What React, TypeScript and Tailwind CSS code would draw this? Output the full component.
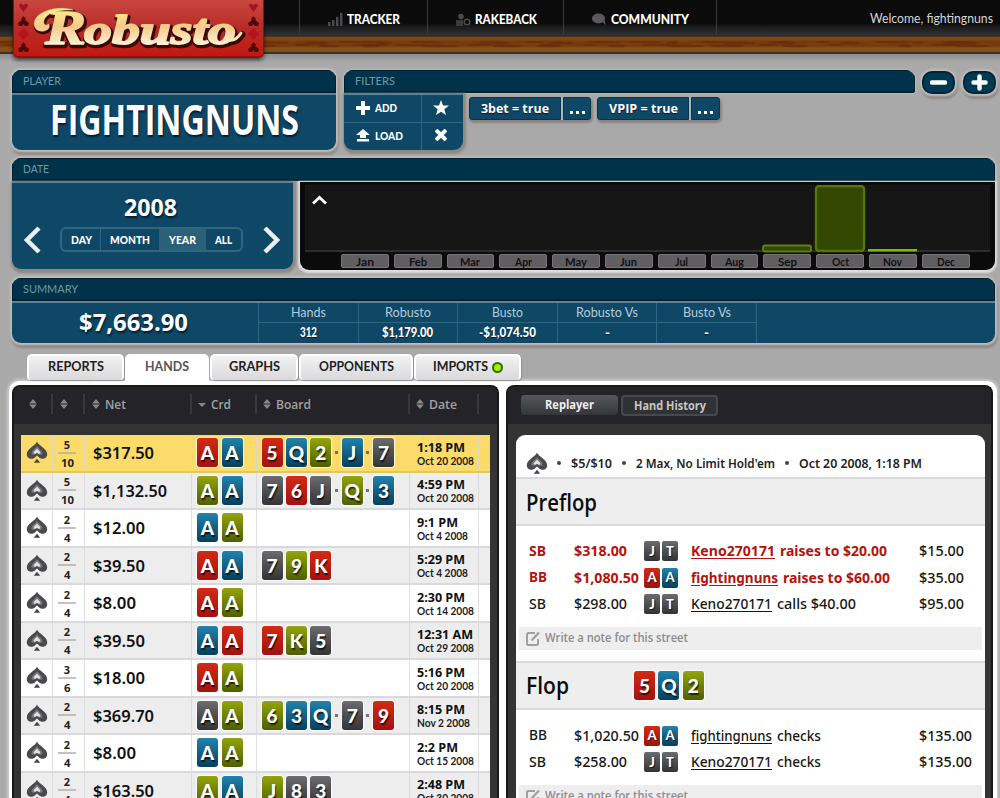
import { useLayoutEffect, useRef, useState, type ReactNode } from 'react';

/** Text condensed or stretched horizontally so that it fills a set width. */
function Fit({ w, className = '', inner = '', children }: { w: number; className?: string; inner?: string; children: ReactNode }) {
  const ref = useRef<HTMLSpanElement>(null);
  const [scale, setScale] = useState(1);
  useLayoutEffect(() => {
    const el = ref.current;
    if (!el) return;
    el.style.transform = 'none';
    const natural = el.getBoundingClientRect().width;
    const next = natural ? w / natural : 1;
    el.style.transform = `scaleX(${next})`;
    setScale(next);
  }, [w, children]);
  return (
    <span className={`inline-block shrink-0 text-left leading-none ${className}`} style={{ width: w }}>
      <span ref={ref} className={`inline-block origin-left whitespace-nowrap ${inner}`} style={{ transform: `scaleX(${scale})` }}>
        {children}
      </span>
    </span>
  );
}

type Suit = 'r' | 'b' | 'g' | 'k';
const suitFill: Record<Suit, string> = {
  r: 'bg-linear-to-b from-[#d42a14] to-[#a01210]',
  b: 'bg-linear-to-b from-[#2283ae] to-[#07405c]',
  g: 'bg-linear-to-b from-[#94a50c] to-[#4f5f00]',
  k: 'bg-linear-to-b from-[#6c6c6f] to-[#343436]',
};

function Card({ c }: { c: string }) {
  return (
    <span className={`flex h-[29px] w-[21px] shrink-0 items-center justify-center rounded-[3px] shadow-[0_0_1px_1px_rgba(255,255,255,0.7)] ${suitFill[c[1] as Suit]}`}>
      <span className="font-[Lato,sans-serif] text-[19px] leading-none font-black text-white [text-shadow:1px_2px_1px_rgba(0,0,0,0.65)]">{c[0]}</span>
    </span>
  );
}

function MiniCard({ c }: { c: string }) {
  return (
    <span className={`flex h-[20px] w-[16px] items-center justify-center rounded-[2px] ${suitFill[c[1] as Suit]}`}>
      <span className="font-[Lato,sans-serif] text-[13px] leading-none font-black text-white [text-shadow:1px_1px_1px_rgba(0,0,0,0.7)]">{c[0]}</span>
    </span>
  );
}

function Spade() {
  return (
    <svg width="22" height="24" viewBox="0 0 22 24">
      <path d="M11 .8C9 4.8.8 8 .8 13.2c0 4.8 5.8 5.8 8.3 3.1l1.9-1.7 1.9 1.7c2.5 2.7 8.3 1.7 8.3-3.1C21.200 8 13 4.800 11 .8Z" fill="#4a4a4c" />
      <path d="M11 5c-1.500 2.500-5.500 4.500-5.500 7.200 0 2.100 3 2.300 5.500-.2 2.500 2.500 5.500 2.300 5.500.2C16.500 9.500 12.500 7.500 11 5Z" fill="#77777a" />
      <path d="M11 7.500c-1.200 1.700-3.300 2.900-3.300 4.300 0 1.300 2 1.300 3.300 0 1.300 1.300 3.300 1.300 3.300 0 0-1.400-2.100-2.600-3.300-4.300Z" fill="#e2e2e2" />
      <path d="m11 17.800 3.200 4H7.800Z" fill="#444446" />
    </svg>
  );
}

function Sort({ desc = false }: { desc?: boolean }) {
  return (
    <svg width="8" height="10" viewBox="0 0 8 10" fill="#88888b">
      {desc ? <path d="M0 4h8L4 8Z" /> : <path d="M4 0l3.800 4.500H.2ZM4 10l3.800-4.500H.2Z" />}
    </svg>
  );
}

function LogoSuits() {
  return (
    <svg width="11" height="54" viewBox="0 0 11 54">
      <path d="M5.500 12 1 6c0-3 3-3 4.500-.5C7 3 10 3 10 6Z" fill="#a31420" />
      <path d="M5.500 16 3 19l1 1-4 3 1 3h3l1.500-2L7 26h3l1-3-4-3 1-1Z" fill="#4e0a0a" />
      <path d="M5.500 28 11 34l-5.500 6L0 34Z" fill="#b3131a" />
      <path d="M5.500 42 3 45l1 1-4 3 1 3h3l1.500-2L7 52h3l1-3-4-3 1-1Z" fill="#4e0a0a" />
    </svg>
  );
}

function Logo() {
  return (
    <div className="absolute top-0 left-[13px] flex h-[58px] w-[251px] justify-between rounded-b-[5px] border-x border-b-2 border-[#961008] bg-linear-to-b from-[#c9473f] via-[#b82a26] to-[#c2180e] px-1 shadow-[0_2px_4px_rgba(0,0,0,0.65)]">
      <LogoSuits />
      <svg width="218" height="56" viewBox="0 0 218 56">
        <defs>
          <linearGradient id="cream" gradientUnits="userSpaceOnUse" x1="0" y1="8" x2="0" y2="46">
            <stop offset="0" stopColor="#fbf08c" />
            <stop offset=".5" stopColor="#f5c98c" />
            <stop offset="1" stopColor="#fff6dc" />
          </linearGradient>
        </defs>
        <g fontFamily="'Liberation Serif', serif" fontStyle="italic" fontWeight="700" strokeLinejoin="round">
          <g stroke="#3a0b06" fill="#3a0b06" transform="translate(1 1.500)">
            <path d="M14 31C2 33 0 18 14 12c11-5 23-4 29-2-13.500-.5-24 2-28 8-3 5 0 9 4 6 1 4-1 6-5 7Z" strokeWidth="3" />
            <text x="15" y="44" fontSize="49" textLength="41" lengthAdjust="spacingAndGlyphs" strokeWidth="4.500">R</text>
            <text x="54" y="44" fontSize="43" textLength="152" lengthAdjust="spacingAndGlyphs" strokeWidth="4.500">obusto</text>
            <path d="M198 40c6 1 10-2 13-7" fill="none" strokeWidth="7" strokeLinecap="round" />
          </g>
          <g fill="url(#cream)" stroke="url(#cream)">
            <path d="M14 31C2 33 0 18 14 12c11-5 23-4 29-2-13.500-.5-24 2-28 8-3 5 0 9 4 6 1 4-1 6-5 7Z" strokeWidth=".5" />
            <path d="M198 40c6 1 10-2 13-7" fill="none" strokeWidth="3" strokeLinecap="round" />
            <text x="15" y="44" fontSize="49" textLength="41" lengthAdjust="spacingAndGlyphs" strokeWidth="1.500">R</text>
            <text x="54" y="44" fontSize="43" textLength="152" lengthAdjust="spacingAndGlyphs" strokeWidth="1.800">obusto</text>
          </g>
        </g>
      </svg>
      <LogoSuits />
    </div>
  );
}

function Wood() {
  const streaks = Array.from({ length: 90 }, (_, i) => ({
    x: (i * 137) % 1000,
    y: 5 + ((i * 7) % 6),
    rx: 6 + ((i * 11) % 14),
    ry: 0.6 + (i % 3) * 0.5,
    fill: i % 3 === 0 ? '#834613' : '#6a2b09',
  }));
  return (
    <svg width="1000" height="18" className="block">
      <rect width="1000" height="18" fill="#7c4817" />
      <rect y="4.500" width="1000" height="6" fill="#743a0d" />
      {streaks.map((s, i) => (
        <ellipse key={i} cx={s.x} cy={s.y} rx={s.rx} ry={s.ry} fill={s.fill} opacity=".7" />
      ))}
      <rect y="11.500" width="1000" height="4" fill="#87501a" />
      <rect y="0" width="1000" height="1" fill="#4c3018" />
      <rect y="16" width="1000" height="2" fill="#39342c" />
    </svg>
  );
}

function NavItem({ label, w, box, icon }: { label: string; w: number; box: string; icon: ReactNode }) {
  return (
    <div className={`flex h-[35px] items-center border-l border-[#3a3a3a] pt-[3px] ${box}`}>
      {icon}
      <Fit w={w} className="font-[Lato,sans-serif] text-[13px] font-black text-white">{label}</Fit>
    </div>
  );
}

function PanelHead({ label, w }: { label: string; w: number }) {
  return (
    <div className="flex h-[23px] items-center border border-b-2 border-[#00202f] bg-[#003349] pb-px pl-[10px]">
      <Fit w={w} className="font-[Lato,sans-serif] text-[11px] text-[#6d99ab]">{label}</Fit>
    </div>
  );
}

const panelBlue = 'bg-[#0f4767]';
const glow = 'shadow-[0_0_2px_2px_#c2bcba,1px_3px_2px_2px_#8d8987]';

function FilterTag({ label, w, boxes }: { label: string; w: number; boxes: [string, string] }) {
  return (
    <div className="flex h-[23px] gap-[2px] rounded-[4px] bg-[#aeb6ba] shadow-[1px_2px_2px_1px_#898583]">
      <div className={`flex items-center justify-center rounded-l-[3px] border border-[#00384f] ${panelBlue} ${boxes[0]}`}>
        <Fit w={w} className="text-[13px] font-bold text-white [text-shadow:0_1px_1px_#001c2c]">{label}</Fit>
      </div>
      <div className={`flex items-end justify-center gap-[3px] rounded-r-[3px] border border-[#00384f] pb-[5px] ${panelBlue} ${boxes[1]}`}>
        <i className="size-[3px] bg-white" /><i className="size-[3px] bg-white" /><i className="size-[3px] bg-white" />
      </div>
    </div>
  );
}

const months: [string, number][] = [['Jan', 18], ['Feb', 18], ['Mar', 20], ['Apr', 17], ['May', 22], ['Jun', 17], ['Jul', 13], ['Aug', 19], ['Sep', 19], ['Oct', 17], ['Nov', 19], ['Dec', 18]];

function Chart() {
  return (
    <div className="h-[88px] w-[695px] rounded-b-[9px] bg-[#0b0b0b] px-[5px] pt-[3px] shadow-[0_1px_2px_2px_#dedede]">
      <div className="relative h-[67px] border-b-2 border-[#2e2d2e] bg-[#181718] bg-[repeating-linear-gradient(90deg,transparent_0_1px,rgba(0,0,0,0.12)_1px_2px)]">
        <svg className="absolute top-[10px] left-[7px]" width="15" height="10" fill="none" stroke="#fff" strokeWidth="2.800"><path d="m1 8.500 6.500-6 6.500 6" /></svg>
        <svg className="absolute top-0 left-[457px]" width="158" height="68">
          <rect x="1" y="60.500" width="48" height="6" rx="2" fill="#344700" stroke="#5d8108" strokeWidth="2" />
          <rect x="54" y="1" width="48" height="65" rx="3" fill="#344700" stroke="#557802" strokeWidth="2.400" />
          <rect x="106" y="64" width="49" height="2.500" fill="#82b800" />
        </svg>
      </div>
      <div className="flex gap-[5px] pt-[2px] pl-[36px]">
        {months.map(([m, w]) => (
          <div key={m} className="flex h-[14px] w-[47.800px] items-center justify-center rounded-[2px] border border-[#77737a] bg-[#615e62]">
            <Fit w={w} className="font-[Lato,sans-serif] text-[11px] font-bold text-[#111]">{m}</Fit>
          </div>
        ))}
      </div>
    </div>
  );
}

const stats: [string, number, string, number][] = [
  ['Hands', 35, '312', 17], ['Robusto', 46, '$1,179.00', 51], ['Busto', 31, '-$1,074.50', 57], ['Robusto Vs', 62, '-', 5], ['Busto Vs', 48, '-', 5],
];

type Row = { lo: string; hi: string; net: string; nw: number; crd: string[]; board: string[]; t: string; tw: number; d: string; dw: number };
const rows: Row[] = [
  { lo: '5', hi: '10', net: '$317.50', nw: 61, crd: ['Ar', 'Ab'], board: ['5r', 'Qb', '2g', 'Jb', '7k'], t: '1:18 PM', tw: 48, d: 'Oct 20 2008', dw: 57 },
  { lo: '5', hi: '10', net: '$1,132.50', nw: 74, crd: ['Ag', 'Ab'], board: ['7k', '6r', 'Jk', 'Qg', '3b'], t: '4:59 PM', tw: 48, d: 'Oct 20 2008', dw: 57 },
  { lo: '2', hi: '4', net: '$12.00', nw: 52, crd: ['Ab', 'Ag'], board: [], t: '9:1 PM', tw: 41, d: 'Oct 4 2008', dw: 51 },
  { lo: '2', hi: '4', net: '$39.50', nw: 52, crd: ['Ar', 'Ab'], board: ['7k', '9g', 'Kr'], t: '5:29 PM', tw: 48, d: 'Oct 4 2008', dw: 51 },
  { lo: '2', hi: '4', net: '$8.00', nw: 43, crd: ['Ar', 'Ag'], board: [], t: '2:30 PM', tw: 48, d: 'Oct 14 2008', dw: 57 },
  { lo: '2', hi: '4', net: '$39.50', nw: 52, crd: ['Ab', 'Ar'], board: ['7r', 'Kg', '5k'], t: '12:31 AM', tw: 56, d: 'Oct 29 2008', dw: 57 },
  { lo: '3', hi: '6', net: '$18.00', nw: 52, crd: ['Ar', 'Ag'], board: [], t: '5:16 PM', tw: 48, d: 'Oct 20 2008', dw: 57 },
  { lo: '2', hi: '4', net: '$369.70', nw: 61, crd: ['Ak', 'Ag'], board: ['6g', '3b', 'Qb', '7k', '9r'], t: '8:15 PM', tw: 48, d: 'Nov 2 2008', dw: 53 },
  { lo: '2', hi: '4', net: '$8.00', nw: 43, crd: ['Ab', 'Ag'], board: [], t: '2:2 PM', tw: 41, d: 'Oct 15 2008', dw: 57 },
  { lo: '2', hi: '4', net: '$163.50', nw: 61, crd: ['Ag', 'Ab'], board: ['Jg', '8k', '3k'], t: '2:48 PM', tw: 48, d: 'Oct 30 2008', dw: 57 },
];

const cols = 'grid grid-cols-[32px_32px_107px_64.500px_153.500px_69px_11px]';
const cell = 'flex items-center border-r border-[#d6d6dc]/80';

function HandRow({ r, i }: { r: Row; i: number }) {
  const tone = i === 0 ? 'bg-[#fbdc6a] border-[#e5c75f]' : i % 2 ? 'bg-[#ededee] border-[#d9d9de]' : 'bg-white border-[#d9d9de]';
  return (
    <div className={`h-[37.500px] border-b-2 ${cols} ${tone}`}>
      <div className={`${cell} pt-px pl-[5px]`}><Spade /></div>
      <div className={`${cell} flex-col justify-center pt-[2px] pr-[3px] text-[11px] leading-none font-bold text-[#222]`}>
        <span className="h-[13px]">{r.lo}</span>
        <span className="h-[2px] w-[18px] bg-[#a9a9aa]/70" />
        <Fit w={r.hi === '10' ? 13 : 6.5} className="mt-[3px] h-[12px]">{r.hi}</Fit>
      </div>
      <div className={`${cell} pt-px pl-[8px]`}><Fit w={r.nw} className="font-['Noto_Sans',sans-serif] text-[16.500px] font-semibold text-[#111]">{r.net}</Fit></div>
      <div className={`${cell} gap-[3.500px] pl-[5px]`}>{r.crd.map((c, k) => <Card key={k} c={c} />)}</div>
      <div className={`${cell} pl-[5px]`}>
        {r.board.map((c, k) => (
          <div key={k} className="flex items-center">
            {k > 2 && <i className="mr-[4px] ml-[3.400px] size-[3px] bg-[#555]/80" />}
            {k > 0 && k < 3 && <i className="w-[3.400px]" />}
            <Card c={c} />
          </div>
        ))}
      </div>
      <div className={`${cell} flex-col items-start justify-center gap-[2px] pt-[3px] pl-[7px]`}>
        <Fit w={r.tw} className="h-[12px] text-[12px] font-bold text-[#111]">{r.t}</Fit>
        <Fit w={r.dw} className="h-[11px] font-[Lato,sans-serif] text-[10.500px] font-bold text-[#1c1c1c]">{r.d}</Fit>
      </div>
      <div />
    </div>
  );
}

function HeadCell({ label, w, pad, desc }: { label?: string; w?: number; pad: string; desc?: boolean }) {
  return (
    <div className={`flex h-[20px] items-center gap-[5px] border-r-2 border-[#38383c] ${pad}`}>
      <Sort desc={desc} />
      {label && <Fit w={w ?? 20} className="text-[13px] font-semibold text-[#a2a2a5]">{label}</Fit>}
    </div>
  );
}

type Action = { pos: string; stack: string; sw: number; cards: string[]; who: string; whoW: number; act: string; aw: number; pot: string; pw: number; red?: boolean };

function ActionRow({ a }: { a: Action }) {
  return (
    <div className={`grid h-[26.500px] grid-cols-[45px_70px_47px_228px_1fr] items-center pl-[13px] font-['Noto_Sans',sans-serif] text-[14px] ${a.red ? 'font-bold text-[#b3140c]' : 'font-medium text-[#161616]'}`}>
      <Fit w={a.pos === 'SB' ? 17 : 18} className="text-[13.500px]">{a.pos}</Fit>
      <Fit w={a.sw}>{a.stack}</Fit>
      <div className="flex gap-[2px]">{a.cards.map((c) => <MiniCard key={c} c={c} />)}</div>
      <div className="flex gap-[5px]">
        <Fit w={a.whoW} inner="underline underline-offset-2">{a.who}</Fit>
        <Fit w={a.aw}>{a.act}</Fit>
      </div>
      <Fit w={a.pw} className="font-medium text-[#161616]">{a.pot}</Fit>
    </div>
  );
}

const preflop: Action[] = [
  { pos: 'SB', stack: '$318.00', sw: 53, cards: ['Jk', 'Tk'], who: 'Keno270171', whoW: 84, act: 'raises to $20.00', aw: 107, pot: '$15.00', pw: 45, red: true },
  { pos: 'BB', stack: '$1,080.50', sw: 65, cards: ['Ar', 'Ab'], who: 'fightingnuns', whoW: 87, act: 'raises to $60.00', aw: 107, pot: '$35.00', pw: 45, red: true },
  { pos: 'SB', stack: '$298.00', sw: 53, cards: ['Jk', 'Tk'], who: 'Keno270171', whoW: 81, act: 'calls $40.00', aw: 79, pot: '$95.00', pw: 45 },
];
const flop: Action[] = [
  { pos: 'BB', stack: '$1,020.50', sw: 65, cards: ['Ar', 'Ab'], who: 'fightingnuns', whoW: 81, act: 'checks', aw: 44, pot: '$135.00', pw: 53 },
  { pos: 'SB', stack: '$258.00', sw: 53, cards: ['Jk', 'Tk'], who: 'Keno270171', whoW: 81, act: 'checks', aw: 44, pot: '$135.00', pw: 53 },
];

function NoteBar() {
  return (
    <div className="mx-[3px] flex h-[23px] items-center bg-[#eeeeee] pl-[7px]">
      <svg width="15" height="15" viewBox="0 0 15 15" fill="none" stroke="#a0a0a0" strokeWidth="2">
        <path d="M9 2H2.500Q1 2 1 3.500v9Q1 14 2.500 14h8q1.500 0 1.500-1.500V8" /><path d="m5.500 9.500L13 1.500" strokeWidth="2.200" />
      </svg>
      <Fit w={143} className="ml-[4px] text-[12px] font-semibold text-[#8c8c8c]">Write a note for this street</Fit>
    </div>
  );
}

function StreetHead({ label, w, cards = [] }: { label: string; w: number; cards?: string[] }) {
  return (
    <div className="flex h-[49px] items-center border-y-2 border-[#d9d9df] bg-[#eeeeee] pt-px pl-[10px]">
      <Fit w={w} className="text-[23px] font-semibold text-[#0c0c0c]">{label}</Fit>
      <div className="flex gap-[3.400px] pl-[65px]">{cards.map((c) => <Card key={c} c={c} />)}</div>
    </div>
  );
}

const tabs: { label: string; w: number; box: string; on?: boolean; dot?: boolean }[] = [
  { label: 'REPORTS', w: 56, box: 'w-[97px]' },
  { label: 'HANDS', w: 44, box: 'w-[84px]', on: true },
  { label: 'GRAPHS', w: 51, box: 'w-[88px]' },
  { label: 'OPPONENTS', w: 75, box: 'w-[114px]' },
  { label: 'IMPORTS', w: 55, box: 'w-[107px]', dot: true },
];

export default function App() {
  return (
    <div className="h-[798px] w-[1000px] overflow-hidden bg-[#a9a9a9] font-['Open_Sans',sans-serif]">
      <header className="relative h-[54px] bg-linear-to-b from-[#0a0a0a] from-65% to-[#2c2c2c]">
        <div className="flex h-[36px] justify-between bg-linear-to-b from-[#0b0b0b] from-65% via-[#1c1c1c] via-75% to-[#303236] pl-[299px]">
          <nav className="flex">
            <NavItem label="TRACKER" w={53} box="w-[128px] pl-[27px]" icon={
              <svg width="20" height="13" fill="#4b4a4d"><path d="M1 9h2.500v4H1ZM5 7h2.500v6H5ZM9 4h2.500v9H9ZM13 0h2.500v13H13Z" /></svg>} />
            <NavItem label="RAKEBACK" w={62} box="w-[136px] pl-[27px]" icon={
              <svg width="20" height="13" fill="none" stroke="#4b4a4d" strokeWidth="1.500"><path d="M1 8h7M1 10h7M1 12h7" /><circle cx="6" cy="3.500" r="2" fill="#4b4a4d" /><circle cx="12" cy="9" r="2.800" /></svg>} />
            <NavItem label="COMMUNITY" w={78} box="w-[154px] border-r pl-[27px]" icon={
              <svg width="20" height="13" fill="#5b595c"><ellipse cx="7.500" cy="5.500" rx="6.500" ry="5" /><path d="m10 8 5 4-2-6Z" /></svg>} />
          </nav>
          <div className="flex items-center pt-[3px] pr-[7px]">
            <Fit w={123} className="font-[Lato,sans-serif] text-[12.500px] text-[#d5d5d5]">Welcome, fightingnuns</Fit>
          </div>
        </div>
        <Wood />
        <Logo />
      </header>

      <main className="bg-linear-to-b from-[#8e8e8e] to-[#a9a9a9] to-[8px] pt-[16px] pl-[12px]">
        <section className="flex h-[80px] items-start">
          <div className={`h-[80px] w-[324px] overflow-hidden rounded-[9px] ${panelBlue} ${glow}`}>
            <PanelHead label="PLAYER" w={38} />
            <div className="flex h-[57px] items-center justify-center border-t-2 border-[#5b8297] pb-[7px]">
              <Fit w={249} className="text-[41px] font-bold text-white [text-shadow:1px_2px_2px_#001e30]">FIGHTINGNUNS</Fit>
            </div>
          </div>
          <div className="ml-[8px] w-[571px]">
            <div className="overflow-hidden rounded-t-[9px] rounded-br-[3px] shadow-[0_0_2px_1px_#beb9b7]">
              <PanelHead label="FILTERS" w={40} />
            </div>
            <div className="flex gap-[6px]">
              <div className={`grid h-[57px] w-[119px] grid-cols-[78px_41px] grid-rows-2 rounded-b-[9px] border-t-2 border-[#5b8297] text-white shadow-[1px_2px_2px_2px_#8d8987] ${panelBlue}`}>
                <div className="flex items-center border-r border-b border-[#2f677f] pb-px pl-[12px]">
                  <svg width="14" height="14" stroke="#fff" strokeWidth="4"><path d="M7 0v14M0 7h14" /></svg>
                  <Fit w={22} className="ml-[5px] font-[Lato,sans-serif] text-[11px] font-black">ADD</Fit>
                </div>
                <div className="flex items-center border-b border-[#2f677f] pb-px pl-[11px]">
                  <svg width="16" height="16" viewBox="0 0 16 16" fill="#fff"><path d="m8 0 2 5.500 6 .1-4.700 3.700L13 15l-5-3.300L3 15l1.700-5.700L0 5.600l6-.1Z" /></svg>
                </div>
                <div className="flex items-center border-r border-[#2f677f] pb-[2px] pl-[12px]">
                  <svg width="14" height="13" fill="#fff"><path d="m7 0 7 6h-4v3H4V6H0ZM1 10h12v2.500H1Z" /></svg>
                  <Fit w={28} className="ml-[5px] font-[Lato,sans-serif] text-[11px] font-black">LOAD</Fit>
                </div>
                <div className="flex items-center pb-[2px] pl-[13px]">
                  <svg width="12" height="12" stroke="#fff" strokeWidth="4"><path d="m1 1 10 10M11 1 1 11" /></svg>
                </div>
              </div>
              <div className="flex gap-[6px] pt-[4px]">
                <FilterTag label="3bet = true" w={68} boxes={['w-[92px]', 'w-[28px]']} />
                <FilterTag label="VPIP = true" w={69} boxes={['w-[92px]', 'w-[29px]']} />
              </div>
            </div>
          </div>
          <div className="ml-[7px] flex gap-[8px] pt-px">
            {[false, true].map((plus) => (
              <div key={String(plus)} className={`flex h-[23px] w-[33px] items-center justify-center rounded-[10px] border-2 border-[#00243a] bg-[#003a52] ${glow}`}>
                <svg width="17" height="17" stroke="#fff" strokeWidth="4.500" strokeLinecap="round"><path d={plus ? 'M2.500 8.500h12M8.500 2.500v12' : 'M2 8.500h13'} /></svg>
              </div>
            ))}
          </div>
        </section>

        <section className="mt-[8px] w-[983px]">
          <div className="overflow-hidden rounded-t-[9px] shadow-[0_0_2px_2px_#bdb8b6]"><PanelHead label="DATE" w={26} /></div>
          <div className="flex justify-between bg-[#a9a9a9]">
            <div className={`flex h-[88px] w-[281px] items-center rounded-b-[9px] border-t-2 border-[#5b8297] shadow-[1px_2px_2px_2px_#8d8987] ${panelBlue}`}>
              <svg className="mt-[27px] ml-[12px]" width="17" height="28" fill="none" stroke="#e8f0f4" strokeWidth="4.500"><path d="M15 2 3 14l12 12" /></svg>
              <div className="ml-[20px] flex w-[181px] flex-col items-center pb-[6px]">
                <Fit w={53} className="mr-[3px] text-[24px] font-bold text-white [text-shadow:1px_2px_2px_#001e30]">2008</Fit>
                <div className="mt-[8px] flex h-[25px] w-[183px] overflow-hidden rounded-[6px] border-2 border-[#2f677f] font-[Lato,sans-serif] text-[11px] font-black text-white">
                  <div className="flex w-[39px] items-center justify-center border-r border-[#2f677f]"><Fit w={21}>DAY</Fit></div>
                  <div className="flex w-[58px] items-center justify-center"><Fit w={40}>MONTH</Fit></div>
                  <div className="flex w-[47px] items-center justify-center bg-[#2b6078]"><Fit w={27}>YEAR</Fit></div>
                  <div className="flex flex-1 items-center justify-center"><Fit w={17}>ALL</Fit></div>
                </div>
              </div>
              <svg className="mt-[27px] ml-[21px]" width="17" height="28" fill="none" stroke="#e8f0f4" strokeWidth="4.500"><path d="m2 2 12 12L2 26" /></svg>
            </div>
            <div className="border-l border-[#c9c9c9] pt-px"><Chart /></div>
          </div>
        </section>

        <section className={`mt-[8px] h-[65px] w-[983px] overflow-hidden rounded-[9px] ${panelBlue} ${glow}`}>
          <PanelHead label="SUMMARY" w={55} />
          <div className="flex h-[42px] border-t-2 border-[#5b8297]">
            <div className="flex w-[247px] items-center justify-center border-r border-[#2f677f] pr-[4px] pb-[2px]">
              <Fit w={109} className="text-[24px] font-bold text-white [text-shadow:1px_2px_2px_#001e30]">$7,663.90</Fit>
            </div>
            {stats.map(([label, lw, value, vw]) => (
              <div key={label} className="w-[99.600px] border-r border-[#2f677f] text-center">
                <div className="flex h-[20px] items-center justify-center border-b border-[#2f677f]"><Fit w={lw} className="font-[Lato,sans-serif] text-[13px] text-[#b5cbd5]">{label}</Fit></div>
                <div className="flex h-[21px] items-center justify-center"><Fit w={vw} className="font-[Lato,sans-serif] text-[12.500px] font-black text-white [text-shadow:0_1px_1px_#001e30]">{value}</Fit></div>
              </div>
            ))}
          </div>
        </section>

        <div className="mt-[11px] flex h-[27px] gap-px pl-[15px]">
          {tabs.map((t) => (
            <div key={t.label} className={`flex items-center justify-center rounded-t-[5px] border-white ${t.box} ${t.on ? 'bg-white' : 'h-[26px] rounded-b-[4px] border-2 border-b-0 bg-linear-to-b from-[#f3f3f3] to-[#d9d9dc] pb-px shadow-[1px_1px_1px_#929292]'}`}>
              <Fit w={t.w} className={`font-[Lato,sans-serif] text-[12.500px] ${t.on ? 'font-bold text-[#555]' : 'font-bold text-[#222]'}`}>{t.label}</Fit>
              {t.dot && <i className="ml-[4px] size-[11px] rounded-full border-2 border-[#2d6d0b] bg-[#a7ee00]" />}
            </div>
          ))}
        </div>
      </main>

      <section className="ml-[9px] flex h-[420px] w-[988px] gap-[7px] rounded-t-[10px] bg-white pt-[4px] pl-[3px] shadow-[0_0_3px_2px_#c9c9c9]">
        <div className="w-[487px] rounded-t-[8px] border-2 border-b-0 border-[#18181b] bg-[#343434]">
          <div className={`${cols} h-[37px] rounded-t-[6px] bg-[#242428] pt-[7px] pl-[7px]`}>
            <HeadCell pad="pl-[8px]" />
            <HeadCell pad="pl-[7px]" />
            <HeadCell pad="pl-[7px]" label="Net" w={21} />
            <HeadCell pad="pl-[6px]" label="Crd" w={20} desc />
            <HeadCell pad="pl-[6px]" label="Board" w={35} />
            <HeadCell pad="pl-[6px]" label="Date" w={28} />
          </div>
          <div className="mt-[11px] ml-[7px] w-[469px]">
            {rows.map((r, i) => <HandRow key={i} r={r} i={i} />)}
          </div>
        </div>
        <div className="w-[487px] rounded-t-[8px] border-2 border-b-0 border-[#18181b] bg-[#343434]">
          <div className="flex h-[37px] gap-[3px] rounded-t-[6px] bg-[#242428] pt-[8px] pl-[13px]">
            <div className="flex h-[20px] w-[97px] items-center justify-center rounded-[4px] bg-linear-to-b from-[#55585b] to-[#34363a]"><Fit w={49} className="text-[12px] font-bold text-[#eee]">Replayer</Fit></div>
            <div className="flex h-[21px] w-[97px] items-center justify-center rounded-[4px] border-2 border-[#46484d] bg-[#303134]"><Fit w={72} className="text-[12px] font-bold text-[#c6c6c6]">Hand History</Fit></div>
          </div>
          <div className="mt-[11px] ml-[8px] h-[370px] w-[469px] rounded-t-[9px] bg-white">
            <div className="flex h-[42px] items-end pb-px pl-[10px] font-['Noto_Sans',sans-serif] text-[12.500px] font-semibold text-[#222]">
              <Spade />
              <i className="mb-[11px] ml-[9px] size-[4px] rounded-full bg-[#444]" />
              <Fit w={41} className="mb-[6px] ml-[10px]">$5/$10</Fit>
              <i className="mb-[11px] ml-[10px] size-[4px] rounded-full bg-[#444]" />
              <Fit w={139} className="mb-[6px] ml-[10px]">2 Max, No Limit Hold'em</Fit>
              <i className="mb-[11px] ml-[10px] size-[4px] rounded-full bg-[#444]" />
              <Fit w={123} className="mb-[6px] ml-[10px]">Oct 20 2008, 1:18 PM</Fit>
            </div>
            <StreetHead label="Preflop" w={71} />
            <div className="pt-[12px]">{preflop.map((a, i) => <ActionRow key={i} a={a} />)}</div>
            <div className="h-[9px]" />
            <NoteBar />
            <div className="h-[11px]" />
            <StreetHead label="Flop" w={43} cards={['5r', 'Qb', '2g']} />
            <div className="pt-[13px]">{flop.map((a, i) => <ActionRow key={i} a={a} />)}</div>
            <div className="h-[9px]" />
            <NoteBar />
          </div>
        </div>
      </section>
    </div>
  );
}
